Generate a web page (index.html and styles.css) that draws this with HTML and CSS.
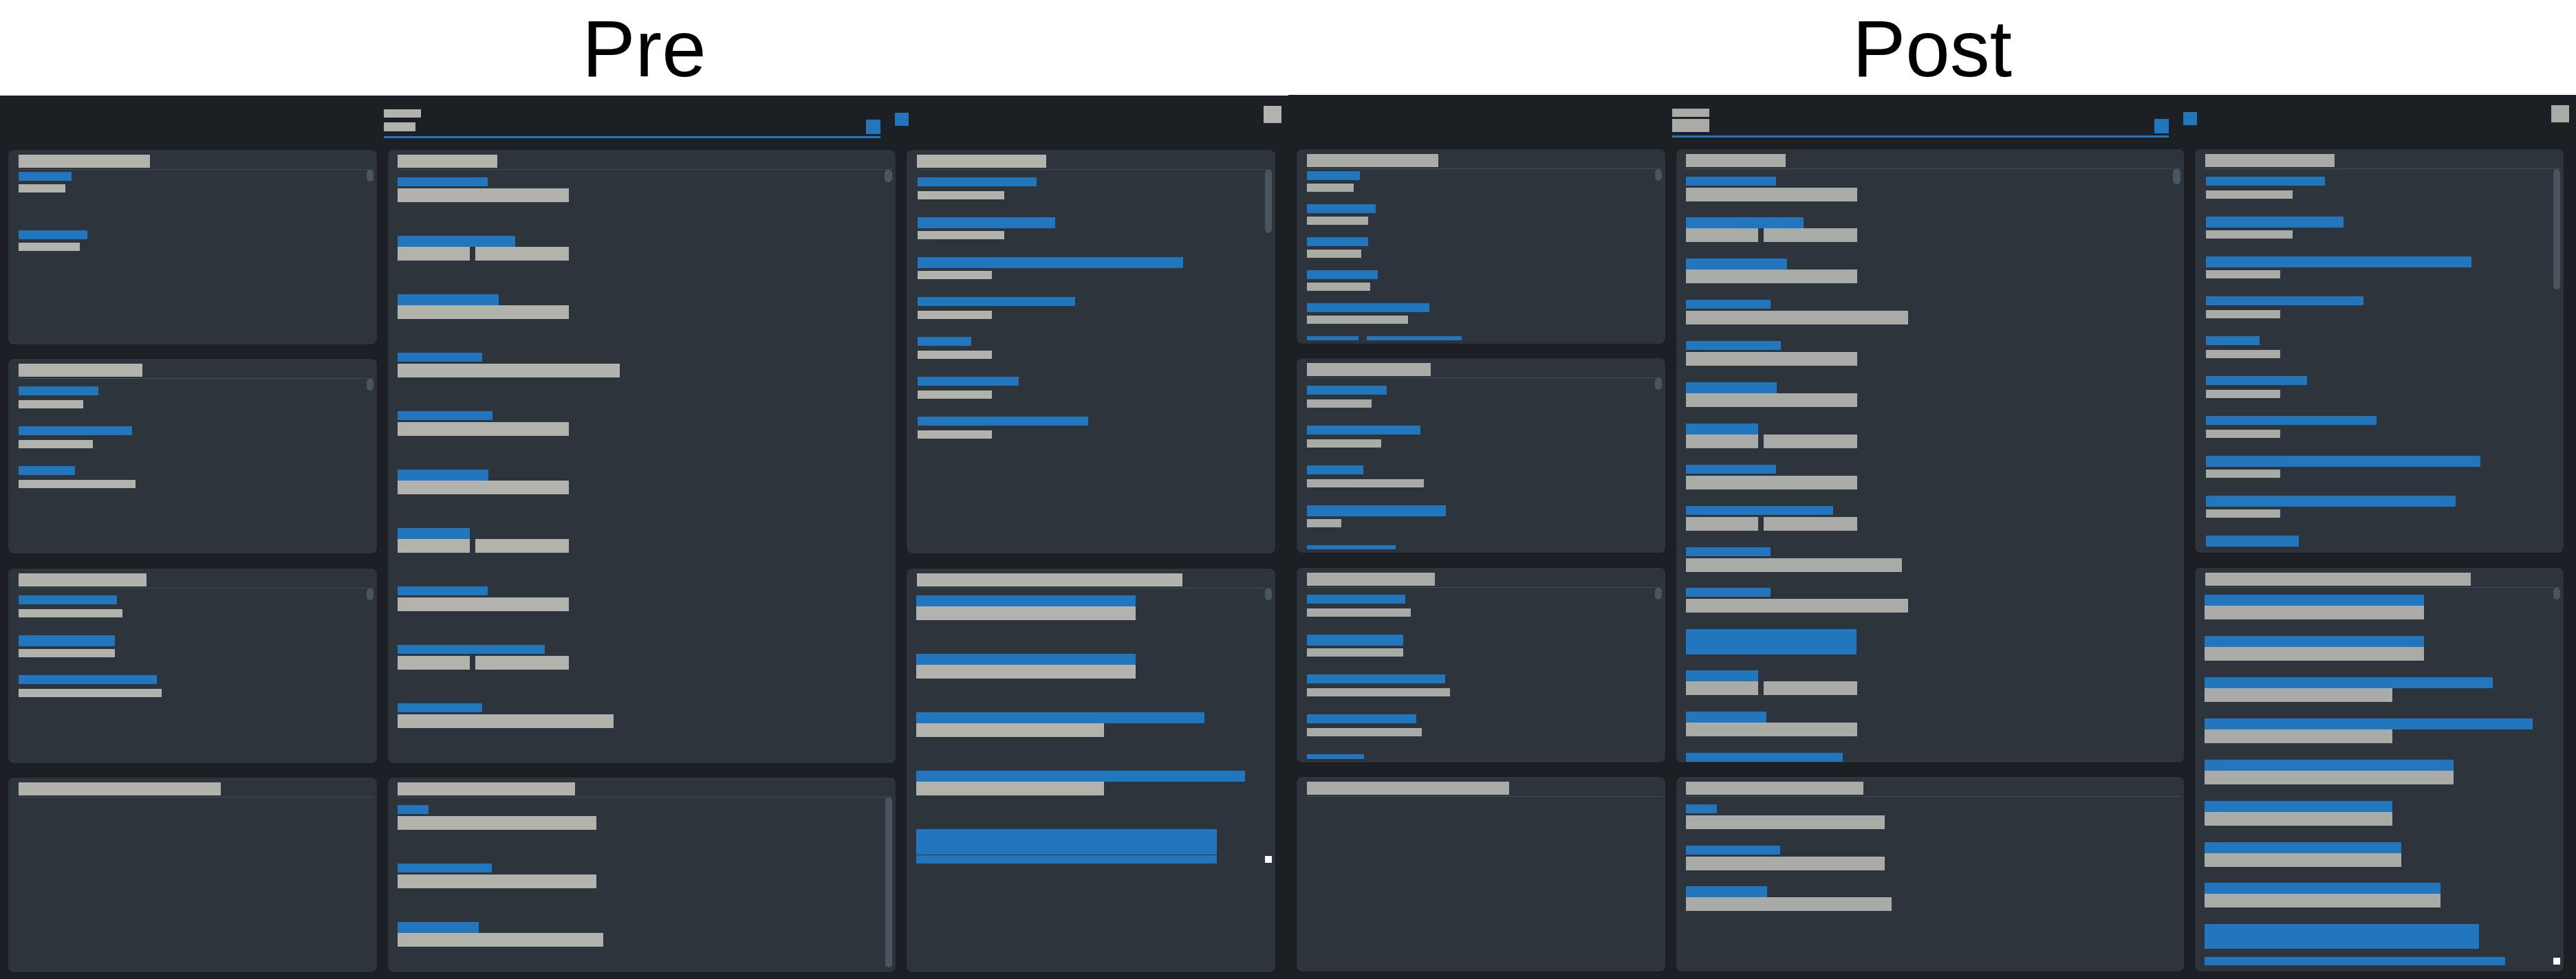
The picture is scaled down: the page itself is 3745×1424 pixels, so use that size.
FILE: index.html
```html
<!DOCTYPE html>
<html lang="en">
<head>
<meta charset="utf-8">
<title>Pre / Post</title>
<link rel="stylesheet" href="styles.css">
</head>
<body>
<div class="compare">

  <section class="half pre">
    <header class="cap">Pre</header>
    <div class="app">
      <div class="topbar">
        <div class="search">
          <div class="search-row">
            <div class="tab"><span class="tl1"></span><span class="tl2"></span></div>
            <span class="sq s1"></span>
          </div>
          <div class="underline"></div>
        </div>
        <span class="sq s2"></span>
        <span class="sq s3"></span>
      </div>
      <div class="board">
        <!-- column 1 -->
        <div class="panel">
          <div class="ph"><span class="title" style="width:191px"></span></div>
          <div class="list tight p85">
            <span class="thumb"></span>
            <div class="it"><span class="b" style="width:77px"></span><span class="g" style="width:68px"></span></div>
            <div class="it"><span class="b" style="width:100px"></span><span class="g" style="width:89px"></span></div>
          </div>
        </div>
        <div class="panel">
          <div class="ph"><span class="title" style="width:180px"></span></div>
          <div class="list p58">
            <span class="thumb"></span>
            <div class="it"><span class="b" style="width:116px"></span><span class="g" style="width:94px"></span></div>
            <div class="it"><span class="b" style="width:165px"></span><span class="g" style="width:108px"></span></div>
            <div class="it"><span class="b" style="width:82px"></span><span class="g" style="width:170px"></span></div>
          </div>
        </div>
        <div class="panel">
          <div class="ph"><span class="title" style="width:186px"></span></div>
          <div class="list p58">
            <span class="thumb"></span>
            <div class="it"><span class="b" style="width:143px"></span><span class="g" style="width:151px"></span></div>
            <div class="it"><span class="b t" style="width:140px"></span><span class="g" style="width:140px"></span></div>
            <div class="it"><span class="b" style="width:201px"></span><span class="g" style="width:208px"></span></div>
          </div>
        </div>
        <div class="panel">
          <div class="ph"><span class="title" style="width:294px"></span></div>
          <div class="list p58"></div>
        </div>

        <!-- column 2 -->
        <div class="panel span3 wide">
          <div class="ph"><span class="title" style="width:145px"></span></div>
          <div class="list roomy p85">
            <span class="thumb th-w"></span>
            <div class="it"><span class="b" style="width:131px"></span><span class="g" style="width:249px"></span></div>
            <div class="it"><span class="b t" style="width:171px"></span><div class="split"><span class="g" style="width:105px"></span><span class="g" style="width:136px"></span></div></div>
            <div class="it"><span class="b t" style="width:147px"></span><span class="g" style="width:249px"></span></div>
            <div class="it"><span class="b" style="width:123px"></span><span class="g" style="width:323px"></span></div>
            <div class="it"><span class="b" style="width:138px"></span><span class="g" style="width:249px"></span></div>
            <div class="it"><span class="b t" style="width:132px"></span><span class="g" style="width:249px"></span></div>
            <div class="it"><span class="b t" style="width:105px"></span><div class="split"><span class="g" style="width:105px"></span><span class="g" style="width:136px"></span></div></div>
            <div class="it"><span class="b" style="width:131px"></span><span class="g" style="width:249px"></span></div>
            <div class="it"><span class="b" style="width:214px"></span><div class="split"><span class="g" style="width:105px"></span><span class="g" style="width:136px"></span></div></div>
            <div class="it"><span class="b" style="width:123px"></span><span class="g" style="width:314px"></span></div>
            <div class="it"><span class="b" style="width:131px"></span><span class="g" style="width:249px"></span></div>
          </div>
        </div>
        <div class="panel wide">
          <div class="ph"><span class="title" style="width:258px"></span></div>
          <div class="list roomy p85">
            <span class="thumb th-full"></span>
            <div class="it"><span class="b" style="width:45px"></span><span class="g" style="width:289px"></span></div>
            <div class="it"><span class="b" style="width:137px"></span><span class="g" style="width:289px"></span></div>
            <div class="it"><span class="b t" style="width:118px"></span><span class="g" style="width:299px"></span></div>
          </div>
        </div>

        <!-- column 3 -->
        <div class="panel span2">
          <div class="ph"><span class="title" style="width:188px"></span></div>
          <div class="list p58 inset">
            <span class="thumb th-92"></span>
            <div class="it"><span class="b" style="width:173px"></span><span class="g" style="width:126px"></span></div>
            <div class="it"><span class="b t" style="width:200px"></span><span class="g" style="width:126px"></span></div>
            <div class="it"><span class="b t" style="width:386px"></span><span class="g" style="width:108px"></span></div>
            <div class="it"><span class="b" style="width:229px"></span><span class="g" style="width:108px"></span></div>
            <div class="it"><span class="b" style="width:78px"></span><span class="g" style="width:108px"></span></div>
            <div class="it"><span class="b" style="width:147px"></span><span class="g" style="width:108px"></span></div>
            <div class="it"><span class="b" style="width:248px"></span><span class="g" style="width:108px"></span></div>
          </div>
        </div>
        <div class="panel span2">
          <div class="ph"><span class="title" style="width:386px"></span></div>
          <div class="list roomy p85">
            <span class="thumb"></span>
            <div class="it"><span class="b t" style="width:319px"></span><span class="g" style="width:319px"></span></div>
            <div class="it"><span class="b t" style="width:319px"></span><span class="g" style="width:319px"></span></div>
            <div class="it"><span class="b t" style="width:419px"></span><span class="g" style="width:273px"></span></div>
            <div class="it"><span class="b t" style="width:478px"></span><span class="g" style="width:273px"></span></div>
            <div class="it sel">
              <span class="blk" style="width:437px"></span>
              <div class="selrow"><span class="bar" style="width:437px"></span><span class="mark"></span></div>
            </div>
          </div>
        </div>
      </div>
    </div>
  </section>

  <section class="half post">
    <header class="cap">Post</header>
    <div class="app">
      <div class="topbar">
        <div class="search">
          <div class="search-row">
            <div class="tab"><span class="tl1"></span><span class="tl2"></span></div>
            <span class="sq s1"></span>
          </div>
          <div class="underline"></div>
        </div>
        <span class="sq s2"></span>
        <span class="sq s3"></span>
      </div>
      <div class="board">
        <!-- column 1 -->
        <div class="panel">
          <div class="ph"><span class="title" style="width:191px"></span></div>
          <div class="list tight p48">
            <span class="thumb"></span>
            <div class="it"><span class="b" style="width:77px"></span><span class="g" style="width:68px"></span></div>
            <div class="it"><span class="b" style="width:100px"></span><span class="g" style="width:89px"></span></div>
            <div class="it"><span class="b" style="width:89px"></span><span class="g" style="width:79px"></span></div>
            <div class="it"><span class="b" style="width:103px"></span><span class="g" style="width:92px"></span></div>
            <div class="it"><span class="b" style="width:178px"></span><span class="g" style="width:147px"></span></div>
            <div class="it"><div class="split bsplit"><span class="b" style="width:75px"></span><span class="b" style="width:138px"></span></div></div>
          </div>
        </div>
        <div class="panel">
          <div class="ph"><span class="title" style="width:180px"></span></div>
          <div class="list p58">
            <span class="thumb"></span>
            <div class="it"><span class="b" style="width:116px"></span><span class="g" style="width:94px"></span></div>
            <div class="it"><span class="b" style="width:165px"></span><span class="g" style="width:108px"></span></div>
            <div class="it"><span class="b" style="width:82px"></span><span class="g" style="width:170px"></span></div>
            <div class="it"><span class="b t" style="width:202px"></span><span class="g" style="width:50px"></span></div>
            <div class="it"><span class="b" style="width:129px"></span><span class="g" style="width:100px"></span></div>
          </div>
        </div>
        <div class="panel">
          <div class="ph"><span class="title" style="width:186px"></span></div>
          <div class="list p58">
            <span class="thumb"></span>
            <div class="it"><span class="b" style="width:143px"></span><span class="g" style="width:151px"></span></div>
            <div class="it"><span class="b t" style="width:140px"></span><span class="g" style="width:140px"></span></div>
            <div class="it"><span class="b" style="width:201px"></span><span class="g" style="width:208px"></span></div>
            <div class="it"><span class="b" style="width:159px"></span><span class="g" style="width:167px"></span></div>
            <div class="it"><span class="b" style="width:83px"></span><span class="g" style="width:100px"></span></div>
          </div>
        </div>
        <div class="panel">
          <div class="ph"><span class="title" style="width:294px"></span></div>
          <div class="list p58"></div>
        </div>

        <!-- column 2 -->
        <div class="panel span3 wide">
          <div class="ph"><span class="title" style="width:145px"></span></div>
          <div class="list roomy p60 deep">
            <span class="thumb th-w th-22"></span>
            <div class="it"><span class="b" style="width:131px"></span><span class="g" style="width:249px"></span></div>
            <div class="it"><span class="b t" style="width:171px"></span><div class="split"><span class="g" style="width:105px"></span><span class="g" style="width:136px"></span></div></div>
            <div class="it"><span class="b t" style="width:147px"></span><span class="g" style="width:249px"></span></div>
            <div class="it"><span class="b" style="width:123px"></span><span class="g" style="width:323px"></span></div>
            <div class="it"><span class="b" style="width:138px"></span><span class="g" style="width:249px"></span></div>
            <div class="it"><span class="b t" style="width:132px"></span><span class="g" style="width:249px"></span></div>
            <div class="it"><span class="b t" style="width:105px"></span><div class="split"><span class="g" style="width:105px"></span><span class="g" style="width:136px"></span></div></div>
            <div class="it"><span class="b" style="width:131px"></span><span class="g" style="width:249px"></span></div>
            <div class="it"><span class="b" style="width:214px"></span><div class="split"><span class="g" style="width:105px"></span><span class="g" style="width:136px"></span></div></div>
            <div class="it"><span class="b" style="width:123px"></span><span class="g" style="width:314px"></span></div>
            <div class="it"><span class="b" style="width:123px"></span><span class="g" style="width:323px"></span></div>
            <div class="it sel"><span class="blk" style="width:248px"></span></div>
            <div class="it"><span class="b t" style="width:105px"></span><div class="split"><span class="g" style="width:105px"></span><span class="g" style="width:136px"></span></div></div>
            <div class="it"><span class="b t" style="width:117px"></span><span class="g" style="width:249px"></span></div>
            <div class="it"><span class="b" style="width:228px"></span><span class="g" style="width:249px"></span></div>
          </div>
        </div>
        <div class="panel wide">
          <div class="ph"><span class="title" style="width:258px"></span></div>
          <div class="list roomy p60">
            <div class="it"><span class="b" style="width:45px"></span><span class="g" style="width:289px"></span></div>
            <div class="it"><span class="b" style="width:137px"></span><span class="g" style="width:289px"></span></div>
            <div class="it"><span class="b t" style="width:118px"></span><span class="g" style="width:299px"></span></div>
          </div>
        </div>

        <!-- column 3 -->
        <div class="panel span2">
          <div class="ph"><span class="title" style="width:188px"></span></div>
          <div class="list p58 inset">
            <span class="thumb th-175"></span>
            <div class="it"><span class="b" style="width:173px"></span><span class="g" style="width:126px"></span></div>
            <div class="it"><span class="b t" style="width:200px"></span><span class="g" style="width:126px"></span></div>
            <div class="it"><span class="b t" style="width:386px"></span><span class="g" style="width:108px"></span></div>
            <div class="it"><span class="b" style="width:229px"></span><span class="g" style="width:108px"></span></div>
            <div class="it"><span class="b" style="width:78px"></span><span class="g" style="width:108px"></span></div>
            <div class="it"><span class="b" style="width:147px"></span><span class="g" style="width:108px"></span></div>
            <div class="it"><span class="b" style="width:248px"></span><span class="g" style="width:108px"></span></div>
            <div class="it"><span class="b t" style="width:399px"></span><span class="g" style="width:108px"></span></div>
            <div class="it"><span class="b t" style="width:363px"></span><span class="g" style="width:108px"></span></div>
            <div class="it"><span class="b t" style="width:135px"></span></div>
          </div>
        </div>
        <div class="panel span2">
          <div class="ph"><span class="title" style="width:386px"></span></div>
          <div class="list roomy p60">
            <span class="thumb"></span>
            <div class="it"><span class="b t" style="width:319px"></span><span class="g" style="width:319px"></span></div>
            <div class="it"><span class="b t" style="width:319px"></span><span class="g" style="width:319px"></span></div>
            <div class="it"><span class="b t" style="width:419px"></span><span class="g" style="width:273px"></span></div>
            <div class="it"><span class="b t" style="width:477px"></span><span class="g" style="width:273px"></span></div>
            <div class="it"><span class="b t" style="width:362px"></span><span class="g" style="width:362px"></span></div>
            <div class="it"><span class="b t" style="width:273px"></span><span class="g" style="width:273px"></span></div>
            <div class="it"><span class="b t" style="width:286px"></span><span class="g" style="width:286px"></span></div>
            <div class="it"><span class="b t" style="width:343px"></span><span class="g" style="width:343px"></span></div>
            <div class="it sel sel-gap">
              <span class="blk" style="width:399px"></span>
              <div class="selrow"><span class="bar" style="width:437px"></span><span class="mark"></span></div>
            </div>
          </div>
        </div>
      </div>
    </div>
  </section>

</div>
</body>
</html>
```

FILE: styles.css
```css
html, body {
  margin: 0;
  padding: 0;
}

body {
  width: 3745px;
  height: 1424px;
  overflow: hidden;
  background: #ffffff;
  font-family: "Liberation Sans", Arial, sans-serif;
}

.compare {
  display: flex;
  height: 1424px;
}

.half {
  display: flex;
  flex-direction: column;
  flex: none;
  --grey: #b2b3ac;
  --blue: #2276be;
}

.pre { width: 1873px; }
.post { width: 1872px; --grey: #a9aba6; }

.cap {
  box-sizing: border-box;
  height: 139px;
  margin: 0;
  padding-top: 13px;
  font-size: 116px;
  line-height: 116px;
  font-weight: normal;
  text-align: center;
  color: #000;
  flex: none;
}

.post .cap { height: 138px; }

.app {
  flex: 1;
  min-height: 0;
  display: flex;
  flex-direction: column;
  background: #1c1f24;
}

/* ---------- top bar ---------- */
.topbar {
  flex: none;
  height: 79px;
  box-sizing: border-box;
  padding-left: 558px;
  display: flex;
  align-items: flex-start;
}

.search {
  width: 722px;
  padding-top: 20px;
  display: flex;
  flex-direction: column;
}

.search-row {
  display: flex;
  justify-content: space-between;
  align-items: flex-end;
}

.tab {
  display: flex;
  flex-direction: column;
  gap: 7px;
  margin-bottom: 4px;
}

.tl1, .tl2 { display: block; background: var(--grey); }
.tl1 { width: 54px; height: 12px; }
.tl2 { width: 46px; height: 13px; }

.post .tab { gap: 3px; margin-bottom: 2px; }
.post .tl2 { width: 54px; height: 19px; }

.underline {
  height: 3px;
  margin-top: 3px;
  background: var(--blue);
}

.sq { display: block; flex: none; }
.s1 { width: 21px; height: 21px; background: var(--blue); }
.s2 { width: 20px; height: 19px; margin-left: 21px; margin-top: 25px; background: var(--blue); }
.s3 { width: 26px; height: 25px; margin-left: auto; margin-right: 10px; margin-top: 15px; background: var(--grey); }

/* ---------- board ---------- */
.board {
  flex: 1;
  min-height: 0;
  display: grid;
  grid-template-columns: 536px 738px 536px;
  grid-template-rows: repeat(4, minmax(0, 1fr));
  grid-auto-flow: column;
  gap: 21.5px 16px;
  padding: 0 0 10px 12px;
}

.post .board { padding-bottom: 11px; }

.panel {
  min-height: 0;
  display: flex;
  flex-direction: column;
  overflow: hidden;
  background: #2e343c;
  border-radius: 8px;
  box-shadow: 0 0 0 1px rgba(0, 0, 0, 0.12);
}

.span2 { grid-row: span 2; }
.span3 { grid-row: span 3; }

.ph {
  flex: none;
  margin: 0 5px 0 15px;
  padding: 7px 0 2px;
  border-bottom: 1px solid #434b54;
}

.wide .ph { margin-left: 13.5px; }

.title {
  display: block;
  height: 19px;
  background: var(--grey);
}

/* ---------- lists ---------- */
.list {
  position: relative;
  flex: 1;
  min-height: 0;
  overflow: hidden;
  margin: 0 5px 5px 0;
  padding: 10.5px 0 0 15px;
}

.list.inset { padding-left: 15.5px; }
.list.tight { padding-top: 2.7px; }
.list.roomy { padding-left: 13.5px; }
.list.deep { margin-bottom: 1px; }

.thumb {
  position: absolute;
  top: 0;
  right: 0;
  width: 10px;
  height: 17px;
  border-radius: 5px;
  background: #4b555f;
}

.th-w { width: 11px; height: 18px; }
.th-22 { height: 22px; }
.th-92 { height: 92px; }
.th-175 { height: 175px; }
.th-full { height: auto; bottom: 2px; }

.it {
  display: flex;
  flex-direction: column;
  align-items: flex-start;
  flex: none;
}

.p48 .it { height: 48px; }
.p58 .it { height: 58px; }
.p60 .it { height: 59.9px; }
.p85 .it { height: 85px; }

.b {
  display: block;
  flex: none;
  height: 13px;
  margin-bottom: 7px;
  background: var(--blue);
}

.b.t { height: 16px; margin-bottom: 4px; }

.g {
  display: block;
  flex: none;
  height: 12px;
  background: var(--grey);
}

.tight .b { margin-bottom: 5px; }

.roomy .b { margin-bottom: 3px; }
.roomy .b.t { margin-bottom: 0; }
.roomy .g { height: 20px; }

.split {
  display: flex;
  gap: 8px;
}

.split.bsplit { gap: 12px; }
.split.bsplit .b { margin-bottom: 0; }

/* selected row */
.sel .blk {
  display: block;
  height: 37px;
  background: var(--blue);
}

.selrow {
  align-self: stretch;
  display: flex;
  justify-content: space-between;
  align-items: center;
  margin-top: 1px;
}

.sel-gap .selrow { margin-top: 12px; }

.bar {
  display: block;
  height: 12px;
  background: var(--blue);
}

.mark {
  display: block;
  width: 10px;
  height: 10px;
  background: #ffffff;
}
```
